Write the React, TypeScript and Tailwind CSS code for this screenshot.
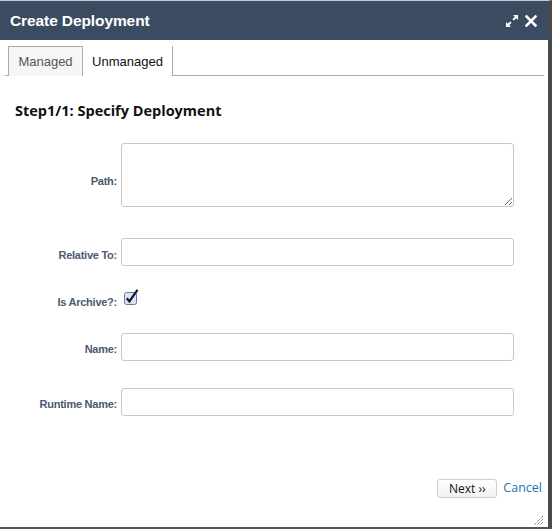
import React from 'react';

const font = { fontFamily: '"Open Sans", "Liberation Sans", sans-serif' };
const arial = { fontFamily: '"Liberation Sans", Arial, sans-serif' };

const fields = [
  { label: 'Relative To:', mt: 'mt-[31px]' },
];

function TextInput({ className = '' }: { className?: string }) {
  return (
    <input
      type="text"
      className={`h-[28px] w-[393px] rounded-[3px] border border-[#c8c8c8] bg-white px-2 text-[12px] outline-none ${className}`}
    />
  );
}

function Label({ children }: { children: React.ReactNode }) {
  return (
    <div className="w-[117px] shrink-0 text-right text-[11px] font-bold tracking-[-0.25px] text-[#4b5a70]" style={arial}>
      {children}
    </div>
  );
}

export default function App() {
  return (
    <div
      className="flex h-[529px] w-[552px] flex-col overflow-hidden border-t border-t-[#c9c9c9] border-r-[4px] border-r-[#4a4a4a] border-b-[2px] border-b-[#555]"
      style={font}
    >
      {/* Title bar */}
      <div className="flex h-[39px] shrink-0 items-center justify-between bg-[#3b4c62] pl-[10px] pr-[11px]">
        <span className="text-[15.5px] font-bold tracking-[-0.1px] text-white" style={arial}>Create Deployment</span>
        <div className="flex items-center gap-[7px]">
          <svg width="12" height="12" viewBox="0 0 12 12" fill="white">
            <path d="M7 0h5v5l-1.8-1.8-2.4 2.4-1.4-1.4 2.4-2.4z" />
            <path d="M5 12H0V7l1.8 1.8 2.4-2.4 1.4 1.4-2.4 2.4z" />
          </svg>
          <svg width="12" height="12" viewBox="0 0 12 12">
            <path d="M1.5 1.5l9 9M10.5 1.5l-9 9" stroke="white" strokeWidth="2.6" strokeLinecap="square" />
          </svg>
        </div>
      </div>

      <div className="relative flex flex-1 flex-col bg-white">
        {/* Tabs */}
        <div className="ml-[5px] mr-[4px] mt-[6px] flex h-[30px] border-b border-b-[#ababab] pl-[3px]" style={arial}>
          <div className="flex h-[30px] w-[75px] items-center justify-center border border-b-0 border-[#ababab] bg-[#f6f6f6] pt-[1px] text-[13px] text-[#555]">
            Managed
          </div>
          <div className="-mb-px flex h-[30px] w-[90px] items-center justify-center border-r border-r-[#ababab] bg-white pt-[2px] text-[13px] text-[#111]">
            Unmanaged
          </div>
        </div>

        <h2 className="ml-[15px] mt-[26px] text-[14.5px] font-bold leading-[18px] text-[#111]">
          Step1/1: Specify Deployment
        </h2>

        <div className="mt-[23px] flex flex-col pl-0">
          <div className="flex items-center gap-[4px]">
            <Label><span className="relative top-[6px]">Path:</span></Label>
            <textarea className="h-[64px] w-[393px] resize-y rounded-[3px] border border-[#c8c8c8] bg-white px-2 text-[12px] outline-none" />
          </div>

          {fields.map((f) => (
            <div key={f.label} className={`flex items-center gap-[4px] ${f.mt}`}>
              <Label><span className="relative top-[3px]">{f.label}</span></Label>
              <TextInput />
            </div>
          ))}

          <div className="mt-[23px] flex items-center gap-[4px]">
            <Label><span className="relative top-[5px]">Is Archive?:</span></Label>
            <svg width="15" height="16" viewBox="0 0 15 16" className="ml-[3px]">
              <rect x="0.5" y="3.5" width="12" height="12" rx="2" fill="#dfe3f3" stroke="#6a74a8" />
              <path d="M2.8 9.2l2.6 3.2L13.5 0.8" fill="none" stroke="#101830" strokeWidth="2.2" />
            </svg>
          </div>

          <div className="mt-[27px] flex items-center gap-[4px]">
            <Label><span className="relative top-[3px]">Name:</span></Label>
            <TextInput />
          </div>

          <div className="mt-[27px] flex items-center gap-[4px]">
            <Label><span className="relative top-[3px]">Runtime Name:</span></Label>
            <TextInput />
          </div>
        </div>

        {/* Footer */}
        <div className="mt-auto mb-[29px] flex items-center justify-end gap-[6px] pr-[6px]">
          <button className="h-[19px] w-[60px] rounded-[3px] border border-[#cfcfcf] bg-gradient-to-b from-white to-[#f2f2f2] text-[12px] leading-[17px] text-[#111]">
            Next ››
          </button>
          <a className="text-[12.5px] text-[#2470ae]">Cancel</a>
        </div>

        {/* resize grip */}
        <svg width="11" height="11" viewBox="0 0 11 11" className="absolute bottom-[1px] right-[4px]">
          <path d="M10 1L1 10M10 4L4 10M10 7L7 10" stroke="#555" strokeWidth="1" strokeDasharray="1 1" />
        </svg>
      </div>
    </div>
  );
}
